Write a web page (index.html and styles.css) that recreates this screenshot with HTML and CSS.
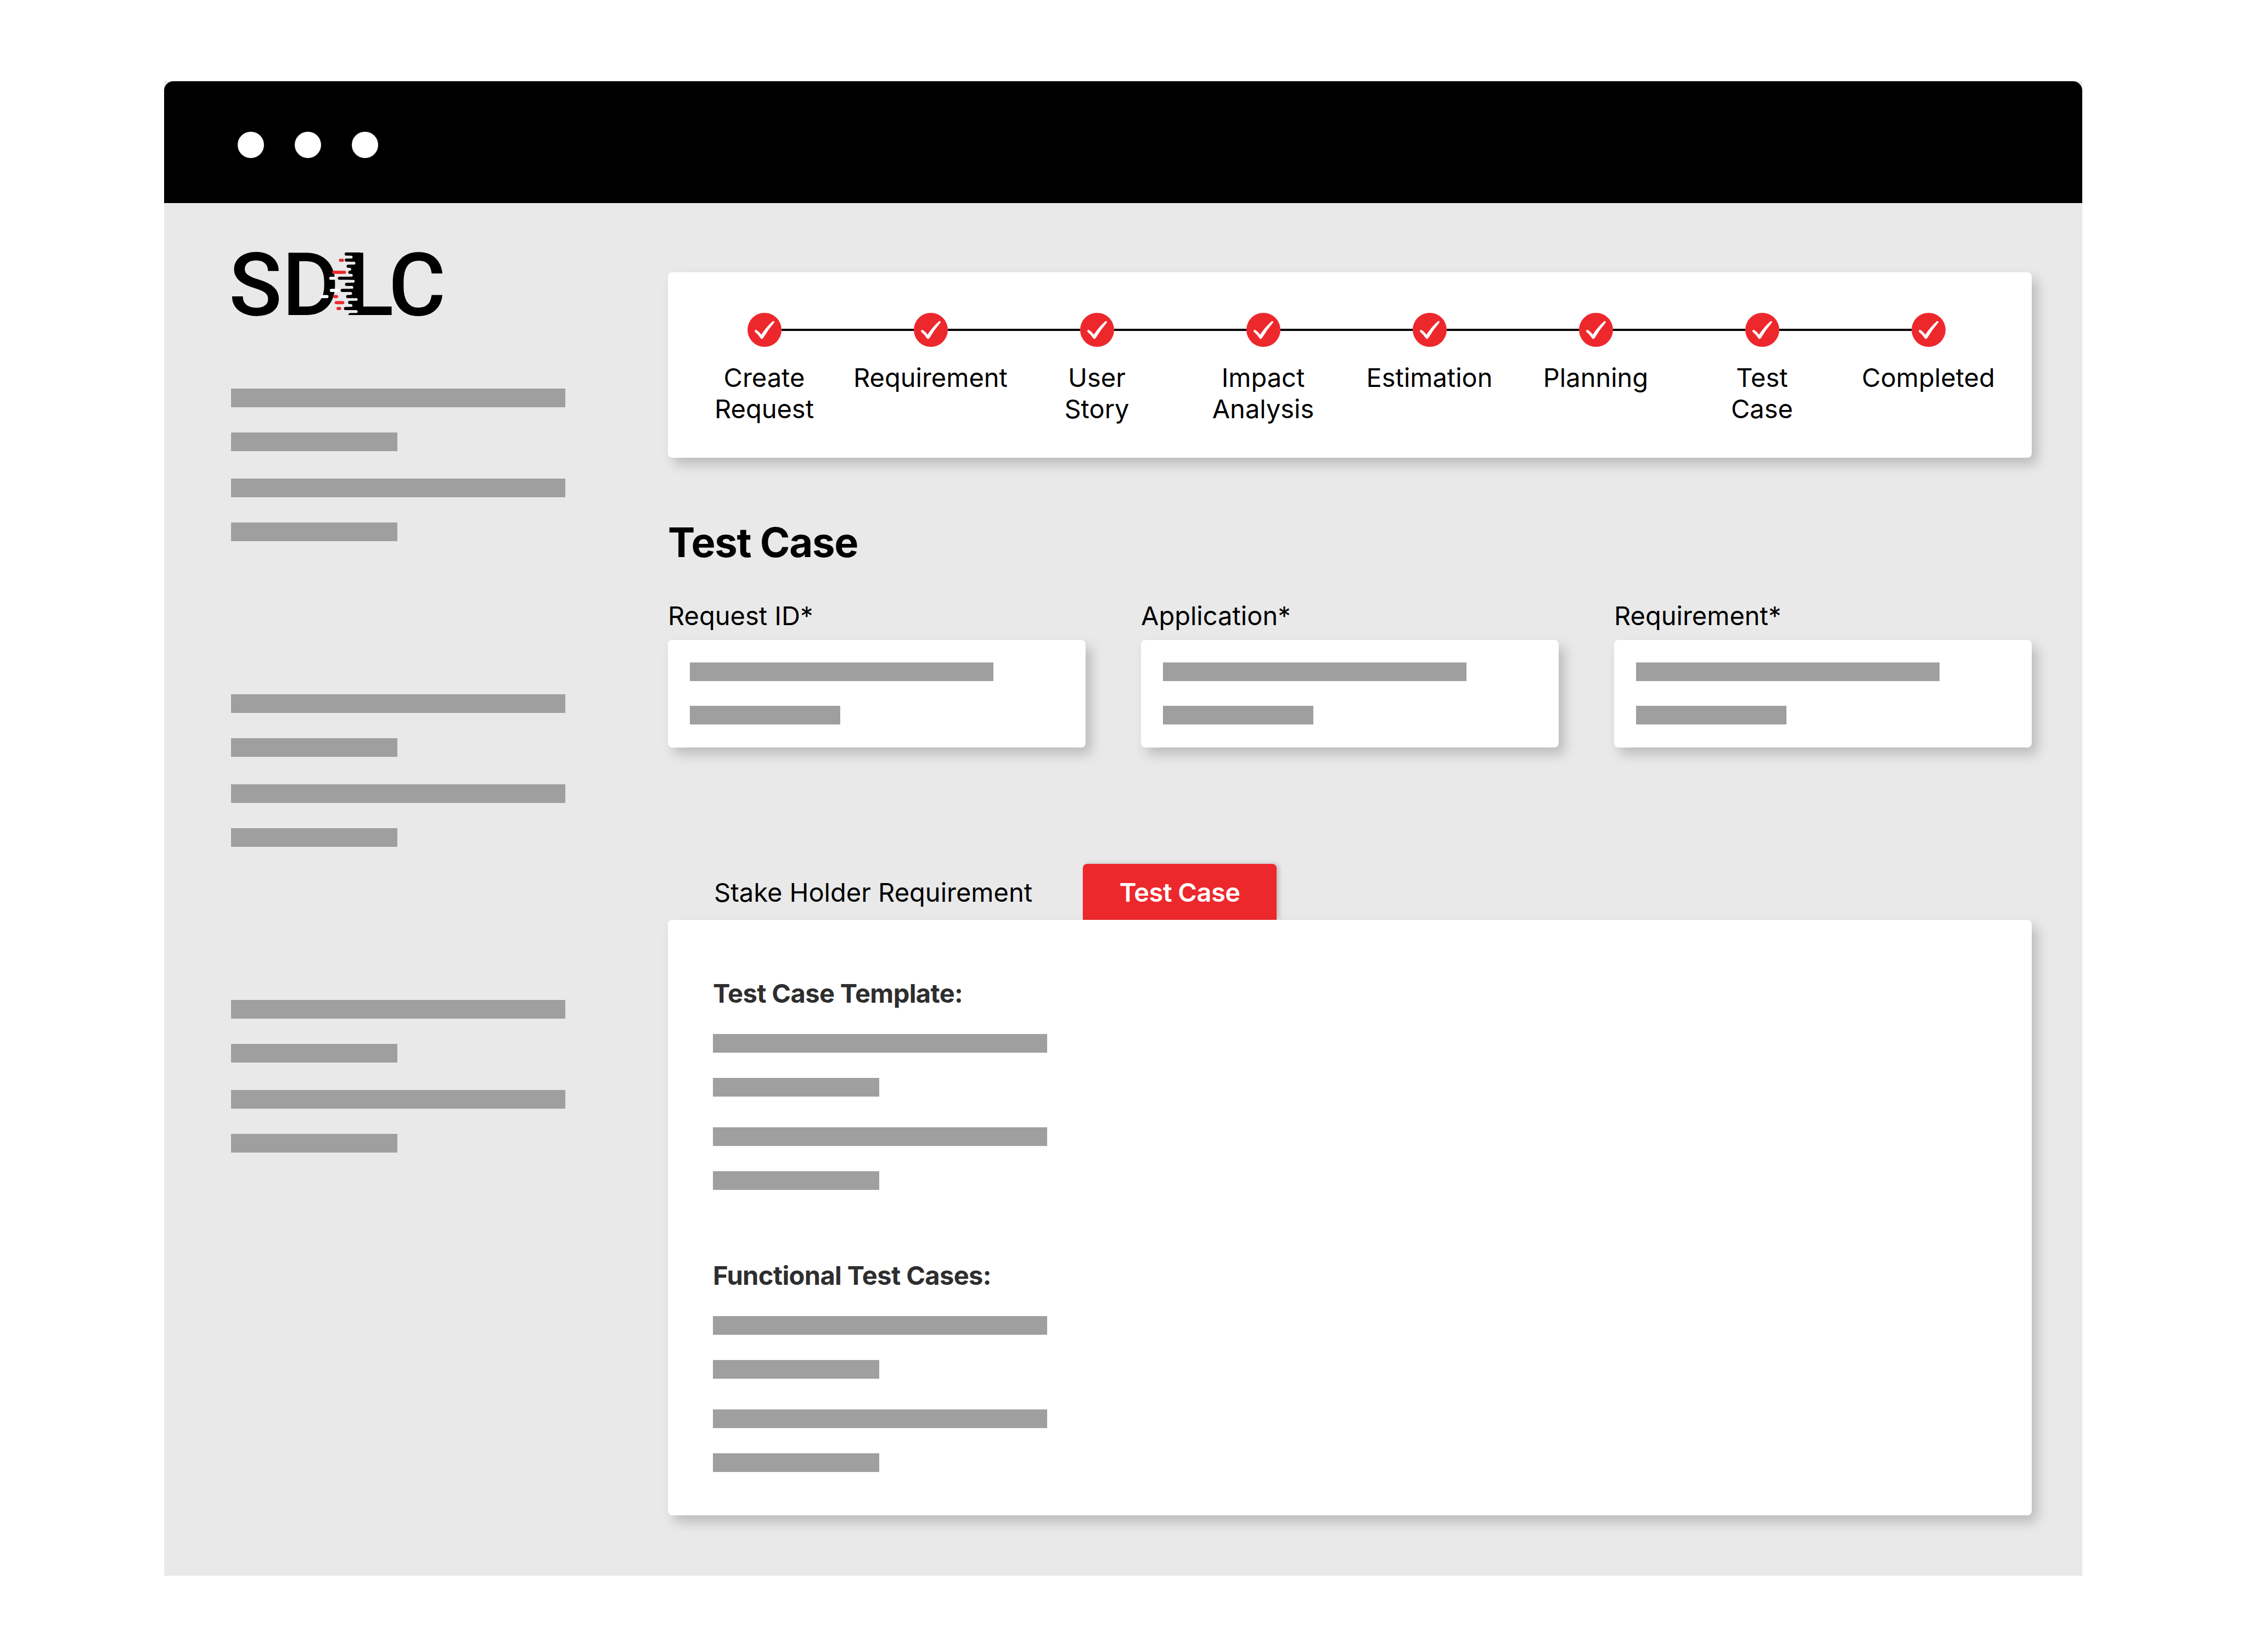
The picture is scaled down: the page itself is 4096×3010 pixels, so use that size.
FILE: index.html
```html
<!DOCTYPE html>
<html lang="en">
<head>
    <meta charset="UTF-8">
    <meta name="viewport" content="width=device-width, initial-scale=1.0">
    <title>SDLC - Test Case</title>
    <link rel="stylesheet" href="styles.css">
</head>
<body>
    <svg class="defs" width="0" height="0">
        <symbol id="check" viewBox="67 75 230 230">
            <circle cx="182" cy="190" r="115" fill="#ed282d"/>
            <path fill="#fff" d="M115 197Q118 188 128 191Q146 203 160 222Q195 170 238 132Q250 128 248 140Q205 190 172 247Q165 255 157 248Q140 222 118 205Z"/>
        </symbol>
    </svg>
    <div class="window">
        <div class="titlebar">
            <span class="dot"></span>
            <span class="dot"></span>
            <span class="dot"></span>
        </div>
        <div class="main">
            <aside class="sidebar">
                <div class="logo">
                    <span>SD</span><span class="logo-l">L
                        <svg class="logo-teeth" viewBox="90 124 277 421">
                            <rect x="295" y="124" width="80" height="421" fill="#000"/>
                            <g fill="#e9e9e9">
                                <rect x="230" y="145" width="83" height="20" rx="10"/>
                                <rect x="230" y="186" width="102" height="20" rx="10"/>
                                <rect x="230" y="227" width="74" height="20" rx="10"/>
                                <rect x="230" y="268" width="84" height="20" rx="10"/>
                                <rect x="230" y="308" width="97" height="20" rx="10"/>
                                <rect x="230" y="349" width="88" height="20" rx="10"/>
                                <rect x="230" y="390" width="80" height="20" rx="10"/>
                                <rect x="230" y="430" width="117" height="20" rx="10"/>
                                <rect x="230" y="471" width="82" height="20" rx="10"/>
                                <rect x="230" y="512" width="117" height="20" rx="10"/>
                            </g>
                            <g fill="#000">
                                <rect x="260" y="124" width="80" height="21" rx="10"/>
                                <rect x="261" y="165" width="80" height="21" rx="10"/>
                                <rect x="273" y="206" width="80" height="21" rx="10"/>
                                <rect x="284" y="247" width="80" height="21" rx="10"/>
                                <rect x="214" y="287" width="120" height="21" rx="10"/>
                                <rect x="262" y="328" width="80" height="21" rx="10"/>
                                <rect x="233" y="369" width="100" height="21" rx="10"/>
                                <rect x="270" y="410" width="80" height="21" rx="10"/>
                                <rect x="283" y="450" width="80" height="21" rx="10"/>
                                <rect x="255" y="491" width="80" height="21" rx="10"/>
                                <rect x="285" y="533" width="80" height="21" rx="10"/>
                            </g>
                            <g fill="#ed282d">
                                <rect x="221" y="166" width="34" height="21" rx="10"/>
                                <rect x="176" y="247" width="93" height="21" rx="10"/>
                                <rect x="183" y="410" width="33" height="21" rx="10"/>
                                <rect x="193" y="451" width="65" height="21" rx="10"/>
                                <rect x="205" y="491" width="32" height="21" rx="10"/>
                            </g>
                            <g fill="#fff">
                                <rect x="156" y="287" width="44" height="21" rx="10"/>
                                <rect x="160" y="369" width="66" height="21" rx="10"/>
                                <rect x="93" y="410" width="58" height="21" rx="10"/>
                            </g>
                        </svg>
                    </span><span>C</span>
                </div>
                <div class="bar-group">
                    <div class="bar bar-long"></div>
                    <div class="bar bar-short"></div>
                    <div class="bar bar-long"></div>
                    <div class="bar bar-short"></div>
                </div>
                <div class="bar-group">
                    <div class="bar bar-long"></div>
                    <div class="bar bar-short"></div>
                    <div class="bar bar-long"></div>
                    <div class="bar bar-short"></div>
                </div>
                <div class="bar-group">
                    <div class="bar bar-long"></div>
                    <div class="bar bar-short"></div>
                    <div class="bar bar-long"></div>
                    <div class="bar bar-short"></div>
                </div>
            </aside>
            <main class="content">
                <div class="card stepper">
                    <div class="step">
                        <div class="step-head"><i class="line"></i><svg class="check"><use href="#check"/></svg><i class="line"></i></div>
                        <div class="step-label">Create<br>Request</div>
                    </div>
                    <div class="step">
                        <div class="step-head"><i class="line"></i><svg class="check"><use href="#check"/></svg><i class="line"></i></div>
                        <div class="step-label">Requirement</div>
                    </div>
                    <div class="step">
                        <div class="step-head"><i class="line"></i><svg class="check"><use href="#check"/></svg><i class="line"></i></div>
                        <div class="step-label">User<br>Story</div>
                    </div>
                    <div class="step">
                        <div class="step-head"><i class="line"></i><svg class="check"><use href="#check"/></svg><i class="line"></i></div>
                        <div class="step-label">Impact<br>Analysis</div>
                    </div>
                    <div class="step">
                        <div class="step-head"><i class="line"></i><svg class="check"><use href="#check"/></svg><i class="line"></i></div>
                        <div class="step-label">Estimation</div>
                    </div>
                    <div class="step">
                        <div class="step-head"><i class="line"></i><svg class="check"><use href="#check"/></svg><i class="line"></i></div>
                        <div class="step-label">Planning</div>
                    </div>
                    <div class="step">
                        <div class="step-head"><i class="line"></i><svg class="check"><use href="#check"/></svg><i class="line"></i></div>
                        <div class="step-label">Test<br>Case</div>
                    </div>
                    <div class="step">
                        <div class="step-head"><i class="line"></i><svg class="check"><use href="#check"/></svg><i class="line"></i></div>
                        <div class="step-label">Completed</div>
                    </div>
                </div>

                <h1>Test Case</h1>

                <div class="fields">
                    <div class="field">
                        <label>Request ID*</label>
                        <div class="card field-box">
                            <div class="bar bar-input"></div>
                            <div class="bar bar-input-short"></div>
                        </div>
                    </div>
                    <div class="field">
                        <label>Application*</label>
                        <div class="card field-box">
                            <div class="bar bar-input"></div>
                            <div class="bar bar-input-short"></div>
                        </div>
                    </div>
                    <div class="field">
                        <label>Requirement*</label>
                        <div class="card field-box">
                            <div class="bar bar-input"></div>
                            <div class="bar bar-input-short"></div>
                        </div>
                    </div>
                </div>

                <div class="tabs">
                    <div class="tab">Stake Holder Requirement</div>
                    <div class="tab tab-active">Test Case</div>
                </div>
                <div class="card panel">
                    <h2>Test Case Template:</h2>
                    <div class="bar-group">
                        <div class="bar bar-long"></div>
                        <div class="bar bar-short"></div>
                        <div class="bar bar-long"></div>
                        <div class="bar bar-short"></div>
                    </div>
                    <h2>Functional Test Cases:</h2>
                    <div class="bar-group">
                        <div class="bar bar-long"></div>
                        <div class="bar bar-short"></div>
                        <div class="bar bar-long"></div>
                        <div class="bar bar-short"></div>
                    </div>
                </div>
            </main>
        </div>
    </div>
</body>
</html>
```
FILE: styles.css
```css
body {
    margin: 0;
    background-color: #ffffff;
    color: #000000;
    font-family: Inter, "Liberation Sans", sans-serif;
    font-size: 47px;
    line-height: 57px;
}

.defs {
    position: absolute;
}

.window {
    width: 3495px;
    margin: 148px 0 139px 299px;
    background-color: #e9e9e9;
}

.titlebar {
    display: flex;
    align-items: center;
    gap: 56px;
    height: 222px;
    box-sizing: border-box;
    padding: 10px 0 0 134px;
    background-color: #000000;
    border-radius: 17px 17px 0 0;
}

.dot {
    width: 48px;
    height: 48px;
    border-radius: 50%;
    background-color: #ffffff;
}

.main {
    display: flex;
    padding: 0 92px 110px 122px;
}

.sidebar {
    width: 796px;
    padding-top: 70px;
}

.logo {
    display: flex;
    height: 160px;
    margin: 0 0 108px -4px;
    font-family: Roboto, sans-serif;
    font-size: 160px;
    font-weight: 500;
    line-height: 160px;
}

.logo-l {
    position: relative;
    margin-left: 12.5px;
    margin-right: -9.5px;
}

.logo-teeth {
    position: absolute;
    right: 60.5px;
    top: 20px;
    width: 75px;
    height: 114px;
}

.bar {
    height: 34px;
    background-color: #9f9f9f;
}

.bar-group {
    display: grid;
    gap: 46px;
    margin-bottom: 279px;
}

.bar-long {
    width: 609px;
}

.bar-short {
    width: 303px;
}

.bar-group .bar:nth-child(3) {
    margin-top: 4px;
}

.content {
    flex: 1;
    padding-top: 126px;
}

.card {
    background-color: #ffffff;
    border-radius: 8px;
    box-shadow: 10px 12px 22px rgba(0, 0, 0, 0.2);
}

.stepper {
    display: grid;
    grid-template-columns: repeat(8, 303px);
    height: 338px;
    box-sizing: border-box;
    padding: 74px 0 0 24px;
}

.step {
    text-align: center;
}

.step-head {
    display: flex;
    align-items: center;
}

.line {
    flex: 1;
    height: 4px;
    background-color: #000000;
}

.step:first-child .line:first-child,
.step:last-child .line:last-child {
    visibility: hidden;
}

.check {
    width: 62px;
    height: 62px;
}

.step-label {
    margin-top: 27px;
}

h1 {
    margin: 109px 0 60px;
    font-size: 74px;
    line-height: 90px;
    font-weight: 700;
    letter-spacing: -1.2px;
}

.fields {
    display: grid;
    grid-template-columns: repeat(3, 761px);
    gap: 101px;
}

.field label {
    display: block;
    margin-bottom: 16px;
}

.field-box {
    display: grid;
    gap: 45px;
    padding: 41px 40px 42px;
}

.bar-input {
    width: 553px;
}

.bar-input-short {
    width: 274px;
}

.tabs {
    display: flex;
    align-items: center;
    gap: 92px;
    height: 102px;
    margin-top: 212px;
    padding-left: 84px;
}

.tab-active {
    display: flex;
    align-items: center;
    justify-content: center;
    width: 353px;
    height: 102px;
    background-color: #ed282d;
    color: #ffffff;
    font-weight: 600;
    letter-spacing: -0.5px;
    border-radius: 8px 8px 0 0;
    box-shadow: 4px 0 8px rgba(0, 0, 0, 0.2);
}

.panel {
    position: relative;
    height: 1085px;
    box-sizing: border-box;
    padding: 105px 82px 0;
}

h2 {
    margin: 0 0 46px;
    font-size: 47px;
    line-height: 57px;
    font-weight: 700;
    letter-spacing: -0.6px;
    color: #2e2e2e;
}

.panel .bar-group {
    margin-bottom: 127px;
}

.panel .bar-group .bar:nth-child(3) {
    margin-top: 10px;
}
```
